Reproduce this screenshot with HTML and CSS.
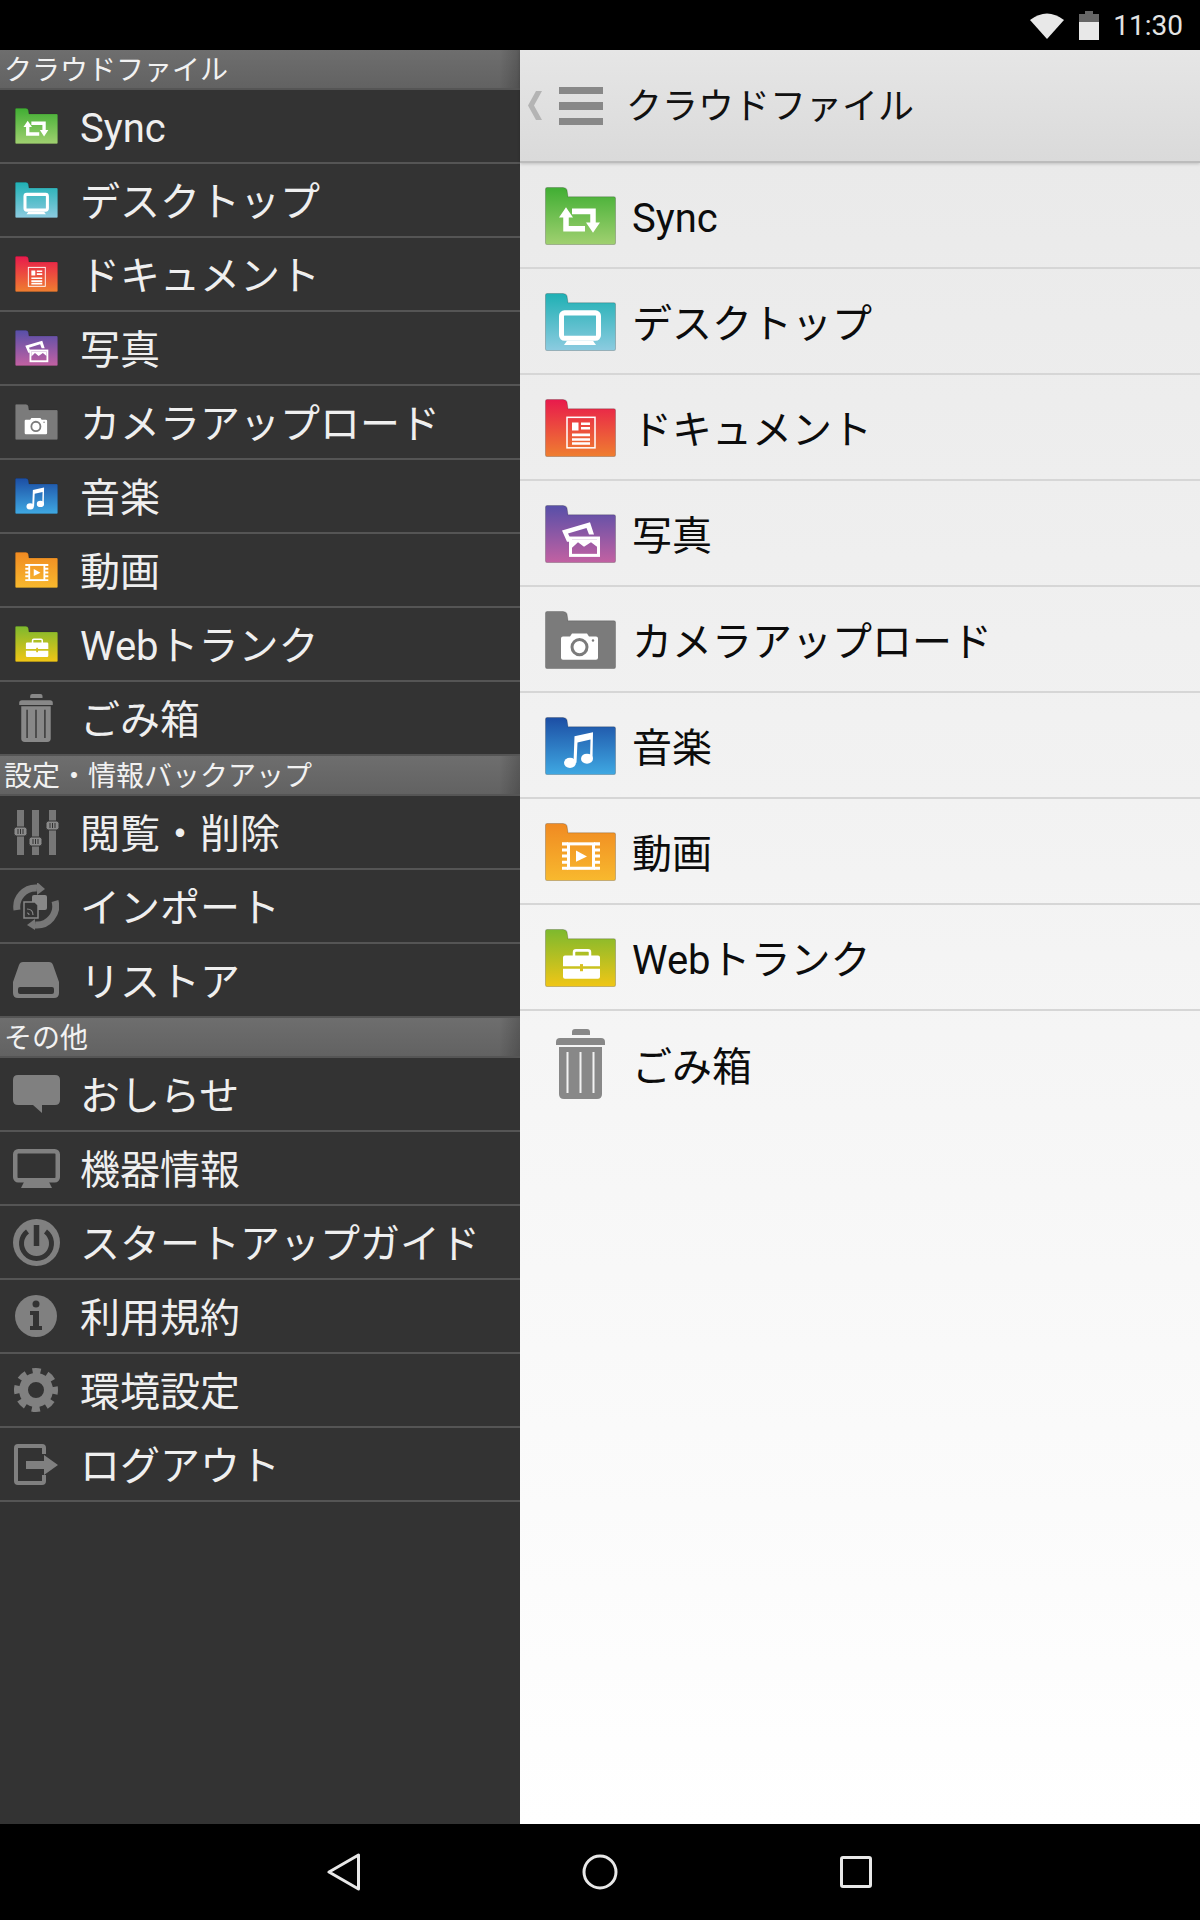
FILE: index.html
```html
<!DOCTYPE html>
<html lang="ja">
<head>
    <meta charset="utf-8">
    <title>クラウドファイル</title>
    <link rel="stylesheet" href="styles.css">
</head>
<body>
    <svg class="defs" width="0" height="0" aria-hidden="true">
        <defs>
            <linearGradient id="g-sync" x1="0" y1="0" x2="0" y2="1"><stop offset="0" stop-color="#40ae33"/><stop offset="1" stop-color="#a0d070"/></linearGradient>
            <linearGradient id="g-desk" x1="0" y1="0" x2="0" y2="1"><stop offset="0" stop-color="#1fb0b4"/><stop offset="1" stop-color="#8ccbe0"/></linearGradient>
            <linearGradient id="g-doc" x1="0" y1="0" x2="0" y2="1"><stop offset="0" stop-color="#e81a4c"/><stop offset="1" stop-color="#ef7e30"/></linearGradient>
            <linearGradient id="g-photo" x1="0" y1="0" x2="0" y2="1"><stop offset="0" stop-color="#574fa8"/><stop offset="1" stop-color="#c261a2"/></linearGradient>
            <linearGradient id="g-music" x1="0" y1="0" x2="0" y2="1"><stop offset="0" stop-color="#1c4ea4"/><stop offset="1" stop-color="#3fa8e2"/></linearGradient>
            <linearGradient id="g-video" x1="0" y1="0" x2="0" y2="1"><stop offset="0" stop-color="#f08a22"/><stop offset="1" stop-color="#f8b92e"/></linearGradient>
            <linearGradient id="g-web" x1="0" y1="0" x2="0" y2="1"><stop offset="0" stop-color="#7db92e"/><stop offset="1" stop-color="#f0c616"/></linearGradient>

            <path id="folder-shape" d="M2 .5H18Q21 .5 22 3L23 9.500H69Q70.500 9.500 70.500 11V55Q70.500 56.500 69 56.500H2Q.5 56.500 .5 55V2Q.5 .5 2 .5Z"/>

            <symbol id="f-sync" viewBox="0 0 71 57" preserveAspectRatio="none">
                <use href="#folder-shape" fill="url(#g-sync)" stroke="#000" stroke-opacity=".2"/>
                <path d="M21 28V41H40M27 24H48V36" fill="none" stroke="#fff" stroke-width="5.500"/>
                <path d="M21 20 14 30H28ZM48 45 41 35H55Z" fill="#fff"/>
            </symbol>
            <symbol id="f-desk" viewBox="0 0 71 57" preserveAspectRatio="none">
                <use href="#folder-shape" fill="url(#g-desk)" stroke="#000" stroke-opacity=".2"/>
                <rect x="16.500" y="19.500" width="37" height="25" rx="3" fill="none" stroke="#fff" stroke-width="5"/>
                <path d="M22 47H48L51 51H19Z" fill="#fff"/>
            </symbol>
            <symbol id="f-doc" viewBox="0 0 71 57" preserveAspectRatio="none">
                <use href="#folder-shape" fill="url(#g-doc)" stroke="#000" stroke-opacity=".2"/>
                <rect x="22" y="18" width="28" height="30" fill="none" stroke="#fff" stroke-width="1.500"/>
                <path d="M27 23H33.500V31H27ZM36 23H45V25.500H36ZM36 27.500H45V30H36ZM27 34H45V36.500H27ZM27 38.500H45V41H27ZM27 42.500H45V45H27Z" fill="#fff"/>
            </symbol>
            <symbol id="f-photo" viewBox="0 0 71 57" preserveAspectRatio="none">
                <use href="#folder-shape" fill="url(#g-photo)" stroke="#000" stroke-opacity=".2"/>
                <path d="M17 25 45 17 49 29H44L41.500 22.500 23 28 24.500 31V36H22Z" fill="#fff"/>
                <rect x="25.500" y="32.500" width="28" height="17" fill="none" stroke="#fff" stroke-width="3"/>
                <path d="M27 34H52V41L46 36.500 39 41 33 36.500 27 42Z" fill="#fff"/>
            </symbol>
            <symbol id="f-camera" viewBox="0 0 71 57" preserveAspectRatio="none">
                <use href="#folder-shape" fill="#7b7b7b" stroke="#000" stroke-opacity=".2"/>
                <path d="M18 25H25L27 22H42L44 25H51Q53 25 53 27V46Q53 48 51 48H18Q16 48 16 46V27Q16 25 18 25Z" fill="#fff"/>
                <circle cx="34.500" cy="35.500" r="7.500" fill="#fff" stroke="#7b7b7b" stroke-width="3"/>
                <circle cx="48" cy="29" r="1.200" fill="#7b7b7b"/>
            </symbol>
            <symbol id="f-music" viewBox="0 0 71 57" preserveAspectRatio="none">
                <use href="#folder-shape" fill="url(#g-music)" stroke="#000" stroke-opacity=".2"/>
                <ellipse cx="25" cy="45" rx="6" ry="5" fill="#fff"/>
                <ellipse cx="42" cy="41" rx="6" ry="5" fill="#fff"/>
                <path d="M28.500 45 29.500 19 48 15 47.500 41H45L45.500 22 32.500 25 31.500 45Z" fill="#fff"/>
            </symbol>
            <symbol id="f-video" viewBox="0 0 71 57" preserveAspectRatio="none">
                <use href="#folder-shape" fill="url(#g-video)" stroke="#000" stroke-opacity=".2"/>
                <rect x="23.500" y="20.500" width="25" height="24" fill="none" stroke="#fff" stroke-width="3"/>
                <path d="M17 20.500H23M17 26.500H23M17 32.500H23M17 38.500H23M17 44.500H23M49 20.500H55M49 26.500H55M49 32.500H55M49 38.500H55M49 44.500H55" stroke="#fff" stroke-width="3"/>
                <path d="M31 27 42 33 31 38Z" fill="#fff"/>
            </symbol>
            <symbol id="f-web" viewBox="0 0 71 57" preserveAspectRatio="none">
                <use href="#folder-shape" fill="url(#g-web)" stroke="#000" stroke-opacity=".2"/>
                <path d="M29 27V23Q29 21 31 21H43Q45 21 45 23V27" fill="none" stroke="#fff" stroke-width="2.500"/>
                <path d="M20 26H53Q55 26 55 28V36.500H18V28Q18 26 20 26ZM18 39H55V47Q55 49 53 49H20Q18 49 18 47Z" fill="#fff"/>
                <rect x="35" y="34.500" width="3" height="7" fill="#d8c020"/>
            </symbol>
            <symbol id="trash" viewBox="0 0 49 70">
                <path d="M16 6V3Q16 0 19 0H31Q34 0 34 3V6Z" fill="#888"/>
                <path d="M0 16V13Q0 9 4 9H45Q49 9 49 13V16Z" fill="#888"/>
                <path d="M3 18H46V65Q46 70 41 70H8Q3 70 3 65Z" fill="#888"/>
                <path d="M11.500 23V64M24.500 23V64M37.500 23V64" stroke="var(--slit)" stroke-width="2"/>
            </symbol>
        </defs>
    </svg>

    <div class="status-bar">
        <svg width="34" height="28" viewBox="0 0 34 28"><path d="M0 9Q17-4 34 9L17 28Z" fill="#e8e8e8"/></svg>
        <svg class="battery" width="20" height="29" viewBox="0 0 20 29">
            <path d="M6 0H14V3H20V11H0V3H6Z" fill="#666"/>
            <path d="M0 11H20V29H0Z" fill="#e8e8e8"/>
        </svg>
        <span class="clock">11:30</span>
    </div>

    <div class="main">
        <div class="drawer">
            <div class="section">クラウドファイル</div>
            <div class="drawer-row"><span class="drawer-icon"><svg width="43" height="36"><use href="#f-sync"/></svg></span>Sync</div>
            <div class="drawer-row"><span class="drawer-icon"><svg width="43" height="36"><use href="#f-desk"/></svg></span>デスクトップ</div>
            <div class="drawer-row"><span class="drawer-icon"><svg width="43" height="36"><use href="#f-doc"/></svg></span>ドキュメント</div>
            <div class="drawer-row"><span class="drawer-icon"><svg width="43" height="36"><use href="#f-photo"/></svg></span>写真</div>
            <div class="drawer-row"><span class="drawer-icon"><svg width="43" height="36"><use href="#f-camera"/></svg></span>カメラアップロード</div>
            <div class="drawer-row"><span class="drawer-icon"><svg width="43" height="36"><use href="#f-music"/></svg></span>音楽</div>
            <div class="drawer-row"><span class="drawer-icon"><svg width="43" height="36"><use href="#f-video"/></svg></span>動画</div>
            <div class="drawer-row"><span class="drawer-icon"><svg width="43" height="36"><use href="#f-web"/></svg></span>Webトランク</div>
            <div class="drawer-row"><span class="drawer-icon trash-dark"><svg width="34" height="48"><use href="#trash"/></svg></span>ごみ箱</div>

            <div class="section">設定・情報バックアップ</div>
            <div class="drawer-row">
                <span class="drawer-icon">
                    <svg width="46" height="45" viewBox="0 0 46 45">
                        <path d="M4 0H11V45H4ZM19 0H26V45H19ZM36 0H43V45H36Z" fill="#777"/>
                        <rect x="1" y="17" width="13" height="9" rx="2.500" fill="#8a8a8a" stroke="#333"/>
                        <rect x="16" y="27" width="13" height="9" rx="2.500" fill="#8a8a8a" stroke="#333"/>
                        <rect x="33" y="11" width="13" height="9" rx="2.500" fill="#8a8a8a" stroke="#333"/>
                        <path d="M5 19V24M7.500 19V24M10 19V24M20 29V34M22.500 29V34M25 29V34M37 13V18M39.500 13V18M42 13V18" stroke="#333"/>
                    </svg>
                </span>閲覧・削除
            </div>
            <div class="drawer-row">
                <span class="drawer-icon">
                    <svg width="46" height="47" viewBox="0 0 46 47">
                        <path d="M4 27A19 19 0 0 1 24 5" fill="none" stroke="#777" stroke-width="7"/>
                        <path d="M24-1 32 6 24 12Z" fill="#777"/>
                        <path d="M42 18A19 19 0 0 1 22 42" fill="none" stroke="#777" stroke-width="7"/>
                        <path d="M22 36 14 42 22 47Z" fill="#777"/>
                        <rect x="19" y="12" width="15" height="15" rx="2" fill="#888"/>
                        <path d="M11 19H22L25 22V35H11Z" fill="#333" stroke="#888" stroke-width="1.500"/>
                        <path d="M14 26Q20 26 20 32M14 30Q16 30 16 32" fill="none" stroke="#888" stroke-width="1.200"/>
                    </svg>
                </span>インポート
            </div>
            <div class="drawer-row">
                <span class="drawer-icon">
                    <svg width="46" height="36" viewBox="0 0 46 36">
                        <path d="M10 0H36Q39 0 40 3L46 20V31Q46 36 41 36H5Q0 36 0 31V20L6 3Q7 0 10 0Z" fill="#808080"/>
                        <rect x="5" y="25" width="36" height="7" rx="2" fill="#333"/>
                    </svg>
                </span>リストア
            </div>

            <div class="section">その他</div>
            <div class="drawer-row">
                <span class="drawer-icon">
                    <svg width="47" height="38" viewBox="0 0 47 38"><path d="M5 0H42Q47 0 47 5V25Q47 30 42 30H43V30L29 30 29 38 20 30H5Q0 30 0 25V5Q0 0 5 0Z" fill="#808080"/></svg>
                </span>おしらせ
            </div>
            <div class="drawer-row">
                <span class="drawer-icon">
                    <svg width="47" height="39" viewBox="0 0 47 39">
                        <rect x="2.250" y="2.250" width="42.500" height="29" rx="3" fill="none" stroke="#808080" stroke-width="4.500"/>
                        <path d="M11 33H36L39 39H8Z" fill="#808080"/>
                    </svg>
                </span>機器情報
            </div>
            <div class="drawer-row">
                <span class="drawer-icon">
                    <svg width="47" height="47" viewBox="0 0 47 47">
                        <circle cx="23.500" cy="23.500" r="23.500" fill="#808080"/>
                        <path d="M14.500 12.500A15 15 0 1 0 32.500 12.500" fill="none" stroke="#333" stroke-width="5"/>
                        <path d="M23.500 6V27" stroke="#333" stroke-width="5.500"/>
                    </svg>
                </span>スタートアップガイド
            </div>
            <div class="drawer-row">
                <span class="drawer-icon">
                    <svg width="44" height="42" viewBox="0 0 44 42">
                        <circle cx="22" cy="21" r="21" fill="#808080"/>
                        <circle cx="22" cy="9" r="3.500" fill="#333"/>
                        <path d="M16 16H25V31H28V35H16V31H19V20H16Z" fill="#333"/>
                    </svg>
                </span>利用規約
            </div>
            <div class="drawer-row">
                <span class="drawer-icon">
                    <svg width="44" height="44" viewBox="0 0 44 44">
                        <circle cx="22" cy="22" r="12.500" fill="none" stroke="#808080" stroke-width="9"/>
                        <circle cx="22" cy="22" r="18.500" fill="none" stroke="#808080" stroke-width="7" stroke-dasharray="8 6.530" stroke-dashoffset="4"/>
                    </svg>
                </span>環境設定
            </div>
            <div class="drawer-row">
                <span class="drawer-icon">
                    <svg width="44" height="41" viewBox="0 0 44 41">
                        <path d="M28 2H4Q2 2 2 4V37Q2 39 4 39H28Q30 39 30 37V31M30 10V4Q30 2 28 2" fill="none" stroke="#808080" stroke-width="4"/>
                        <path d="M12 17H30V11L44 21 30 31V25H12Z" fill="#808080"/>
                    </svg>
                </span>ログアウト
            </div>
        </div>

        <div class="pane">
            <div class="pane-header">
                <svg class="back" width="14" height="29" viewBox="0 0 14 29"><path d="M14 0H8L0 14.500 8 29H14L6 14.500Z" fill="#b4b4b4"/></svg>
                <svg class="menu" width="44" height="38" viewBox="0 0 44 38"><path d="M0 0H44V7H0ZM0 15H44V23H0ZM0 31H44V38H0Z" fill="#888"/></svg>
                <span class="pane-title">クラウドファイル</span>
            </div>
            <div class="file-list">
                <div class="file-row"><span class="file-icon"><svg width="71" height="58"><use href="#f-sync"/></svg></span>Sync</div>
                <div class="file-row"><span class="file-icon"><svg width="71" height="58"><use href="#f-desk"/></svg></span>デスクトップ</div>
                <div class="file-row"><span class="file-icon"><svg width="71" height="58"><use href="#f-doc"/></svg></span>ドキュメント</div>
                <div class="file-row"><span class="file-icon"><svg width="71" height="58"><use href="#f-photo"/></svg></span>写真</div>
                <div class="file-row"><span class="file-icon"><svg width="71" height="58"><use href="#f-camera"/></svg></span>カメラアップロード</div>
                <div class="file-row"><span class="file-icon"><svg width="71" height="58"><use href="#f-music"/></svg></span>音楽</div>
                <div class="file-row"><span class="file-icon"><svg width="71" height="58"><use href="#f-video"/></svg></span>動画</div>
                <div class="file-row"><span class="file-icon"><svg width="71" height="58"><use href="#f-web"/></svg></span>Webトランク</div>
                <div class="file-row last"><span class="file-icon trash-light"><svg width="49" height="70"><use href="#trash"/></svg></span>ごみ箱</div>
            </div>
        </div>
    </div>

    <div class="nav-bar">
        <span class="nav-btn"><svg width="34" height="38" viewBox="0 0 34 38"><path d="M31.500 2V36L2 19Z" fill="none" stroke="#e8e8e8" stroke-width="3" stroke-linejoin="round"/></svg></span>
        <span class="nav-btn"><svg width="36" height="36" viewBox="0 0 36 36"><circle cx="18" cy="18" r="16" fill="none" stroke="#e8e8e8" stroke-width="3"/></svg></span>
        <span class="nav-btn"><svg width="32" height="32" viewBox="0 0 32 32"><rect x="1.500" y="1.500" width="29" height="29" rx="1.500" fill="none" stroke="#e8e8e8" stroke-width="3"/></svg></span>
    </div>
</body>
</html>
```

FILE: styles.css
```css
html, body {
    margin: 0;
    padding: 0;
}

body {
    width: 1200px;
    height: 1920px;
    overflow: hidden;
    display: flex;
    flex-direction: column;
    background-color: #000;
    font-family: Roboto, "Noto Sans CJK JP", sans-serif;
}

svg {
    display: block;
}

.defs {
    flex: none;
}

.status-bar {
    height: 50px;
    flex: none;
    display: flex;
    justify-content: flex-end;
    align-items: center;
    padding-right: 17px;
    background-color: #000;
}

.battery {
    margin-left: 15px;
}

.clock {
    margin-left: 14px;
    color: #e4e4e4;
    font-size: 28px;
}

.main {
    flex: 1;
    display: flex;
    min-height: 0;
}

.drawer {
    width: 520px;
    flex: none;
    background-color: #333;
}

.section {
    height: 40px;
    box-sizing: border-box;
    padding-left: 4px;
    border-bottom: 2px solid #555;
    background: linear-gradient(90deg, rgba(0, 0, 0, 0) 96%, rgba(0, 0, 0, .18)), linear-gradient(#6e6e6e, #626262);
    color: #f2f2f2;
    font-size: 28px;
    line-height: 42px;
    white-space: nowrap;
}

.drawer-row {
    height: 74px;
    box-sizing: border-box;
    display: flex;
    align-items: center;
    padding-top: 5px;
    border-bottom: 2px solid #555;
    color: #efefef;
    font-size: 40px;
    line-height: 50px;
    white-space: nowrap;
}

.drawer-icon {
    width: 72px;
    margin-top: -5px;
    margin-right: 8px;
    flex: none;
    display: flex;
    justify-content: center;
}

.trash-dark {
    --slit: #333;
}

.trash-light {
    --slit: #f2f2f2;
}

.pane {
    flex: 1;
    display: flex;
    flex-direction: column;
    min-width: 0;
}

.pane-header {
    height: 113px;
    flex: none;
    position: relative;
    box-sizing: border-box;
    display: flex;
    align-items: center;
    padding-left: 8px;
    border-bottom: 2px solid #bcbcbc;
    background: linear-gradient(#e6e6e6, #dadada);
    box-shadow: 0 1px 3px rgba(0, 0, 0, .18);
    color: #111;
    font-size: 36px;
}

.pane-title {
    padding-bottom: 6px;
}

.back {
    margin-right: 17px;
}

.menu {
    margin-right: 23px;
}

.file-list {
    flex: 1;
    background: linear-gradient(#eaeaea, #fff);
}

.file-row {
    height: 106px;
    box-sizing: border-box;
    display: flex;
    align-items: center;
    padding-top: 7px;
    padding-left: 25px;
    border-bottom: 2px solid #d6d6d6;
    color: #0c0c0c;
    font-size: 40px;
    line-height: 50px;
    white-space: nowrap;
}

.file-row.last {
    border-bottom: 0;
}

.file-icon {
    width: 71px;
    margin-top: -6px;
    margin-right: 16px;
    flex: none;
    display: flex;
    justify-content: center;
}

.file-icon.trash-light {
    margin-top: -7px;
}

.nav-bar {
    height: 96px;
    flex: none;
    display: flex;
    justify-content: center;
    align-items: center;
    background-color: #000;
}

.nav-btn {
    width: 256px;
    display: flex;
    justify-content: center;
}
```
